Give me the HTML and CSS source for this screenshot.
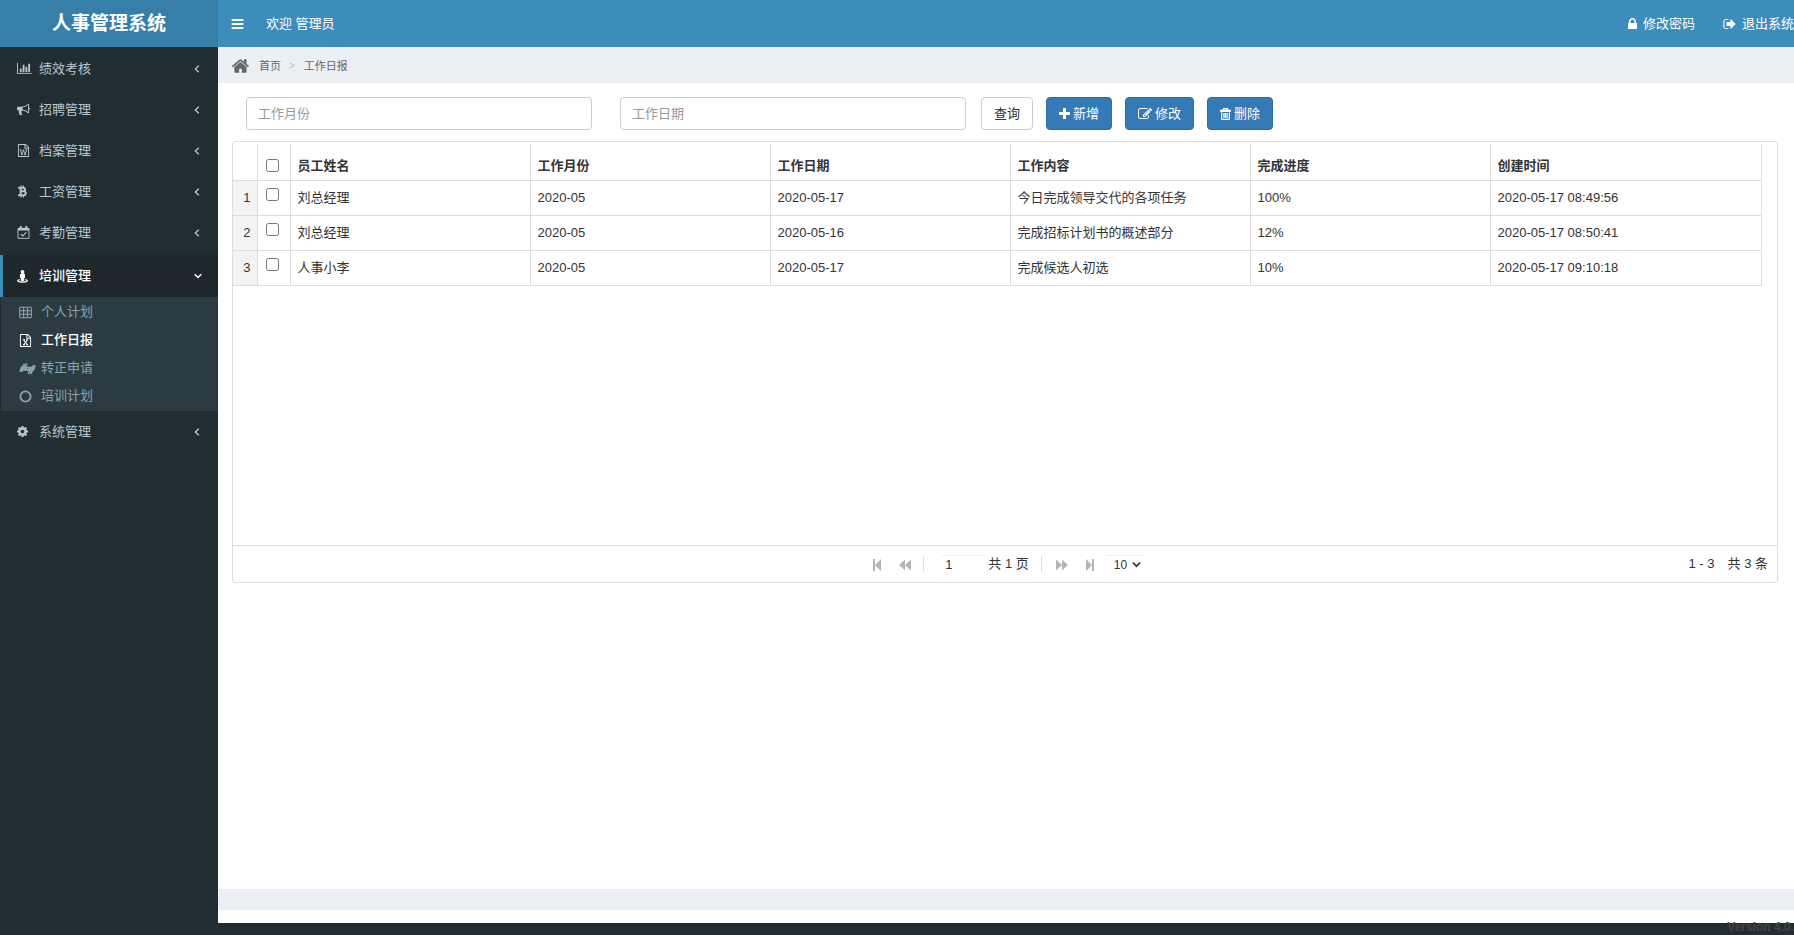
FILE: index.html
```html
<!DOCTYPE html>
<html lang="zh-CN">
<head>
<meta charset="utf-8">
<title>人事管理系统</title>
<link rel="stylesheet" href="styles.css">
</head>
<body>
<svg class="sprite" aria-hidden="true">
  <symbol id="i-chart" viewBox="0 0 2048 1792"><path d="M640 896v512h-256v-512h256zm384-512v1024h-256v-1024h256zm1024 1152v128h-2048v-1536h128v1408h1920zm-640-896v768h-256v-768h256zm384-384v1152h-256v-1152h256z"/></symbol>
  <symbol id="i-horn" viewBox="0 0 1792 1792"><path d="M1664 640q53 0 90.5 37.5t37.5 90.5-37.5 90.5-90.5 37.5v384q0 52-38 90t-90 38q-417-347-812-380-58 19-91 66t-31 100.5 40 92.5q-20 33-23 65.5t6 58 33.5 55 48 50 61.5 50.5q-29 58-111.5 83t-168.5 11.5-132-55.5q-7-23-29.5-87.5t-32-94.5-23-89-15-101 3.5-98.5 22-110.5h-122q-66 0-113-47t-47-113v-192q0-66 47-113t113-47h480q435 0 896-384 52 0 90 38t38 90v384zm-128 604v-954q-394 302-768 343v270q377 42 768 341z"/></symbol>
  <symbol id="i-word" viewBox="128 0 1536 1792"><path d="M1596 380q28 28 48 76t20 88v1152q0 40-28 68t-68 28h-1344q-40 0-68-28t-28-68v-1600q0-40 28-68t68-28h896q40 0 88 20t76 48zm-444-244v376h376q-10-29-22-41l-313-313q-12-12-41-22zm384 1528v-1024h-416q-40 0-68-28t-28-68v-416h-768v1536h1280zm-1175-896v107h70l164 661h159l128-485q7-20 10-46 2-16 2-24h4l3 24q1 3 3.5 20t5.5 26l128 485h159l164-661h70v-107h-300v107h90l-99 438q-5 20-7 46l-2 21h-4l-3-21q-1-5-4-21t-5-25l-144-545h-114l-144 545q-2 9-4.5 24.5t-3.5 21.5l-4 21h-4l-2-21q-2-26-7-46l-99-438h90v-107h-300z"/></symbol>
  <symbol id="i-excel" viewBox="128 0 1536 1792"><path d="M1596 380q28 28 48 76t20 88v1152q0 40-28 68t-68 28h-1344q-40 0-68-28t-28-68v-1600q0-40 28-68t68-28h896q40 0 88 20t76 48zm-444-244v376h376q-10-29-22-41l-313-313q-12-12-41-22zm384 1528v-1024h-416q-40 0-68-28t-28-68v-416h-768v1536h1280z"/><path d="M540 740h290v120h-60l130 190 130-190h-60v-120h290v120h-80l-200 280 210 290h80v120h-300v-120h70l-140-200-140 200h70v120h-300v-120h80l210-290-200-280h-80z"/></symbol>
  <symbol id="i-coin" viewBox="0 0 11 14"><path fill="none" stroke="currentColor" stroke-width="2.1" d="M1 2.900h5.200a1.900 1.900 0 0 1 0 3.900h-3.400 4a2.100 2.100 0 0 1 0 4.300h-6M3.500 3v8"/><path fill="none" stroke="currentColor" stroke-width="1.200" d="M4 .5v2M6.400 .5v2M4 11.500v2M6.400 11.500v2"/></symbol>
  <symbol id="i-calendar" viewBox="0 0 13 14"><path fill="none" stroke="currentColor" d="M.6 2.500h11.800v10.800h-11.800z"/><path d="M.5 2.200h12v2.600h-12zM2.500 0h2v4h-2zM8.500 0h2v4h-2z"/><path fill="none" stroke="currentColor" stroke-width="1.300" d="M3.700 8.700l2 2 3.800-3.800"/></symbol>
  <symbol id="i-person" viewBox="0 0 12 14"><circle cx="6" cy="2.100" r="2.100"/><path d="M4.400 4.100h3.200q1.200 0 1.200 1.300v3.300h-1v3.500h-3.600v-3.500h-1v-3.300q0-1.300 1.200-1.300z"/><path fill="none" stroke="currentColor" stroke-width="1.500" d="M3 10.400c-3 .6-3 2 0 2.500q3 .5 6 0c3-.5 3-1.900 0-2.500"/></symbol>
  <symbol id="i-table" viewBox="0 0 13 12"><path fill="none" stroke="currentColor" stroke-width="1.100" d="M1.500 .8h10q.8 0 .8.8v8.800q0 .8-.8.8h-10q-.8 0-.8-.8v-8.800q0-.8.8-.8zM.7 4.200h11.600M.7 7.700h11.600M4.600 1v10M8.500 1v10"/></symbol>
  <symbol id="i-hands" viewBox="0 0 17 13"><path d="M.2 9.800l1.200-4.300 2.200-1.700 1.200-2.600q.9-.6 1.100.4l-.5 1.900 2.200-2.400q.9-.3 1 .6l-1.300 2.700h1.900q.8.500.1 1.200l-1.500.8 1.500 1.200q.3 1-.7 1.100h-3.900l-2 1.300z"/><path d="M16.800 3.500l-1.200 4.100-2 2.200-1.400 2.600q-.9.600-1.100-.4l.6-2-2.300 2.200q-.9.200-.9-.7l1.200-2.600h-1.700q-.7-.5 0-1.200l1.500-.7-1.300-1.300q-.2-.9.700-1h3.600l2.200-1.900z"/></symbol>
  <symbol id="i-circle" viewBox="0 0 12 12"><circle cx="6" cy="6" r="4.700" fill="none" stroke="currentColor" stroke-width="1.700"/></symbol>
  <symbol id="i-cog" viewBox="128 128 1536 1536"><path d="M1152 896q0-106-75-181t-181-75-181 75-75 181 75 181 181 75 181-75 75-181zm512-109v222q0 12-8 23t-20 13l-185 28q-19 54-39 91 35 50 107 138 10 12 10 25t-9 23q-27 37-99 108t-94 71q-12 0-26-9l-138-108q-44 23-91 38-16 136-29 186-7 28-36 28h-222q-14 0-24.5-8.500t-11.500-21.500l-28-184q-49-16-90-37l-141 107q-10 9-25 9-14 0-25-11-126-114-165-168-7-10-7-23 0-12 8-23 15-21 51-66.500t54-70.500q-27-50-41-99l-183-27q-13-2-21-12.500t-8-23.500v-222q0-12 8-23t19-13l186-28q14-46 39-92-40-57-107-138-10-12-10-24 0-10 9-23 26-36 98.500-107.500t94.500-71.500q13 0 26 10l138 107q44-23 91-38 16-136 29-186 7-28 36-28h222q14 0 24.500 8.500t11.500 21.500l28 184q49 16 90 37l142-107q9-9 24-9 13 0 25 10 129 119 165 170 7 8 7 22 0 12-8 23-15 21-51 66.500t-54 70.500q26 50 41 98l183 28q13 2 21 12.500t8 23.500z"/></symbol>
  <symbol id="i-bars" viewBox="128 256 1536 1280"><path d="M1664 1344v128q0 26-19 45t-45 19h-1408q-26 0-45-19t-19-45v-128q0-26 19-45t45-19h1408q26 0 45 19t19 45zm0-512v128q0 26-19 45t-45 19h-1408q-26 0-45-19t-19-45v-128q0-26 19-45t45-19h1408q26 0 45 19t19 45zm0-512v128q0 26-19 45t-45 19h-1408q-26 0-45-19t-19-45v-128q0-26 19-45t45-19h1408q26 0 45 19t19 45z"/></symbol>
  <symbol id="i-home" viewBox="88 248 1616 1288"><path d="M1472 992v480q0 26-19 45t-45 19h-384v-384h-256v384h-384q-26 0-45-19t-19-45v-480q0-1 .5-3t.5-3l575-474 575 474q1 2 1 6zm223-69l-62 74q-8 9-21 11h-3q-13 0-21-7l-692-577-692 577q-12 8-24 7-13-2-21-11l-62-74q-8-10-7-23.500t11-21.500l719-599q32-26 76-26t76 26l244 204v-195q0-14 9-23t23-9h192q14 0 23 9t9 23v408l219 182q10 8 11 21.500t-7 23.500z"/></symbol>
  <symbol id="i-lock" viewBox="320 128 1152 1408"><path d="M640 768h512v-192q0-106-75-181t-181-75-181 75-75 181v192zm832 96v576q0 40-28 68t-68 28h-960q-40 0-68-28t-28-68v-576q0-40 28-68t68-28h32v-192q0-184 132-316t316-132 316 132 132 316v192h32q40 0 68 28t28 68z"/></symbol>
  <symbol id="i-out" viewBox="64 256 1568 1280"><path d="M704 1440q0 4 1 20t.5 26.500-3 23.500-10 19.500-20.500 6.500h-320q-119 0-203.500-84.500t-84.500-203.500v-704q0-119 84.500-203.500t203.500-84.500h320q13 0 22.500 9.500t9.500 22.500q0 4 1 20t.5 26.500-3 23.500-10 19.500-20.500 6.500h-320q-66 0-113 47t-47 113v704q0 66 47 113t113 47h312l11.500 1 11.500 3 8 5.500 7 9 2 13.500zm928-544q0 26-19 45l-544 544q-19 19-45 19t-45-19-19-45v-288h-448q-26 0-45-19t-19-45v-384q0-26 19-45t45-19h448v-288q0-26 19-45t45-19 45 19l544 544q19 19 19 45z"/></symbol>
  <symbol id="i-plus" viewBox="192 128 1408 1408"><path d="M1600 736v192q0 40-28 68t-68 28h-416v416q0 40-28 68t-68 28h-192q-40 0-68-28t-28-68v-416h-416q-40 0-68-28t-28-68v-192q0-40 28-68t68-28h416v-416q0-40 28-68t68-28h192q40 0 68 28t28 68v416h416q40 0 68 28t28 68z"/></symbol>
  <symbol id="i-edit" viewBox="0 128 1792 1408"><path d="M888 1184l116-116-152-152-116 116v56h96v96h56zm440-720q-16-16-33 1l-350 350q-17 17-1 33t33-1l350-350q17-17 1-33zm80 594v190q0 119-84.500 203.500t-203.500 84.500h-832q-119 0-203.500-84.500t-84.500-203.500v-832q0-119 84.500-203.500t203.500-84.500h832q63 0 117 25 15 7 18 23 3 17-9 29l-49 49q-14 14-32 8-23-6-45-6h-832q-66 0-113 47t-47 113v832q0 66 47 113t113 47h832q66 0 113-47t47-113v-126q0-13 9-22l64-64q15-15 35-7t20 29zm-96-738l288 288-672 672h-288v-288zm444 132l-92 92-288-288 92-92q28-28 68-28t68 28l152 152q28 28 28 68t-28 68z"/></symbol>
  <symbol id="i-trash" viewBox="0 0 11 12"><path fill="none" stroke="currentColor" stroke-width="1.200" d="M3.700 1.800v-1.200h3.600v1.200M1.600 4.500v6q0 .9.900.9h6q.9 0 .9-.9v-6M3.900 5v5M5.500 5v5M7.100 5v5"/><path d="M.8 1.600h9.400q.6 0 .6.600v1.800h-10.600v-1.800q0-.6.600-.6z"/></symbol>
  <symbol id="i-left" viewBox="0 0 6 8"><path fill="none" stroke="currentColor" stroke-width="1.300" d="M4.800 .7l-3.500 3.300 3.500 3.300"/></symbol>
  <symbol id="i-down" viewBox="0 0 8 6"><path fill="none" stroke="currentColor" stroke-width="1.500" d="M.7 1.200l3.300 3.300 3.300-3.300"/></symbol>
  <symbol id="i-first" viewBox="0 0 8 12"><path d="M0 0h2v12h-2zM8 0v12l-6-6z"/></symbol>
  <symbol id="i-prev" viewBox="0 0 12 12"><path d="M6 .5v11l-6-5.500zM12 .5v11l-6-5.500z"/></symbol>
  <symbol id="i-next" viewBox="0 0 12 12"><path d="M0 .5v11l6-5.500zM6 .5v11l6-5.500z"/></symbol>
  <symbol id="i-last" viewBox="0 0 8 12"><path d="M6 0h2v12h-2zM0 0v12l6-6z"/></symbol>
</svg>
<div class="app">
  <aside class="sidebar">
    <h1 class="brand">人事管理系统</h1>
    <nav>
      <ul class="menu">
        <li><a class="menu-link" href="#"><svg class="icon wide"><use href="#i-chart"/></svg><span>绩效考核</span><svg class="arrow"><use href="#i-left"/></svg></a></li>
        <li><a class="menu-link" href="#"><svg class="icon"><use href="#i-horn"/></svg><span>招聘管理</span><svg class="arrow"><use href="#i-left"/></svg></a></li>
        <li><a class="menu-link" href="#"><svg class="icon"><use href="#i-word"/></svg><span>档案管理</span><svg class="arrow"><use href="#i-left"/></svg></a></li>
        <li><a class="menu-link" href="#"><svg class="icon slim"><use href="#i-coin"/></svg><span>工资管理</span><svg class="arrow"><use href="#i-left"/></svg></a></li>
        <li><a class="menu-link" href="#"><svg class="icon"><use href="#i-calendar"/></svg><span>考勤管理</span><svg class="arrow"><use href="#i-left"/></svg></a></li>
        <li>
          <a class="menu-link active" href="#"><svg class="icon slim"><use href="#i-person"/></svg><span>培训管理</span><svg class="arrow open"><use href="#i-down"/></svg></a>
          <ul class="submenu">
            <li><a class="sub-link" href="#"><svg class="icon"><use href="#i-table"/></svg><span>个人计划</span></a></li>
            <li><a class="sub-link current" href="#"><svg class="icon"><use href="#i-excel"/></svg><span>工作日报</span></a></li>
            <li><a class="sub-link" href="#"><svg class="icon hands"><use href="#i-hands"/></svg><span>转正申请</span></a></li>
            <li><a class="sub-link" href="#"><svg class="icon"><use href="#i-circle"/></svg><span>培训计划</span></a></li>
          </ul>
        </li>
        <li><a class="menu-link" href="#"><svg class="icon slim"><use href="#i-cog"/></svg><span>系统管理</span><svg class="arrow"><use href="#i-left"/></svg></a></li>
      </ul>
    </nav>
  </aside>

  <div class="page">
    <header class="topbar">
      <button class="toggle" type="button" aria-label="菜单"><svg class="bars"><use href="#i-bars"/></svg></button>
      <span class="welcome">欢迎 管理员</span>
      <a class="top-link" href="#"><svg class="lock"><use href="#i-lock"/></svg>修改密码</a>
      <a class="top-link" href="#"><svg class="out"><use href="#i-out"/></svg>退出系统</a>
    </header>

    <nav class="crumbs">
      <svg class="home"><use href="#i-home"/></svg>
      <a href="#">首页</a>
      <span class="sep">&gt;</span>
      <span>工作日报</span>
    </nav>

    <main class="content">
      <form class="toolbar">
        <input class="field" type="text" placeholder="工作月份" aria-label="工作月份">
        <input class="field" type="text" placeholder="工作日期" aria-label="工作日期">
        <div class="actions">
          <button class="btn" type="button">查询</button>
          <button class="btn primary" type="button"><svg class="plus"><use href="#i-plus"/></svg>新增</button>
          <button class="btn primary" type="button"><svg class="edit"><use href="#i-edit"/></svg>修改</button>
          <button class="btn primary" type="button"><svg class="trash"><use href="#i-trash"/></svg>删除</button>
        </div>
      </form>

      <section class="panel">
        <div class="grid-area">
          <table class="grid">
            <colgroup><col class="c-num"><col class="c-check"><col class="c-data"><col class="c-data"><col class="c-data"><col class="c-data"><col class="c-data"><col></colgroup>
            <thead>
              <tr><th></th><th class="check"><input type="checkbox" aria-label="全选"></th><th>员工姓名</th><th>工作月份</th><th>工作日期</th><th>工作内容</th><th>完成进度</th><th>创建时间</th></tr>
            </thead>
            <tbody>
              <tr><td class="num">1</td><td class="check"><input type="checkbox" aria-label="选择第1行"></td><td>刘总经理</td><td>2020-05</td><td>2020-05-17</td><td>今日完成领导交代的各项任务</td><td>100%</td><td>2020-05-17 08:49:56</td></tr>
              <tr><td class="num">2</td><td class="check"><input type="checkbox" aria-label="选择第2行"></td><td>刘总经理</td><td>2020-05</td><td>2020-05-16</td><td>完成招标计划书的概述部分</td><td>12%</td><td>2020-05-17 08:50:41</td></tr>
              <tr><td class="num">3</td><td class="check"><input type="checkbox" aria-label="选择第3行"></td><td>人事小李</td><td>2020-05</td><td>2020-05-17</td><td>完成候选人初选</td><td>10%</td><td>2020-05-17 09:10:18</td></tr>
            </tbody>
          </table>
        </div>
        <div class="pager">
          <div class="pages">
            <button class="step" type="button" aria-label="首页"><svg class="edge"><use href="#i-first"/></svg></button>
            <button class="step" type="button" aria-label="上一页"><svg class="turn"><use href="#i-prev"/></svg></button>
            <span class="rule"></span>
            <input class="page-no" type="text" value="1" aria-label="页码">
            <span class="total">共 1 页</span>
            <span class="rule"></span>
            <button class="step" type="button" aria-label="下一页"><svg class="turn"><use href="#i-next"/></svg></button>
            <button class="step" type="button" aria-label="末页"><svg class="edge"><use href="#i-last"/></svg></button>
            <span class="size"><select aria-label="每页条数"><option>10</option></select><svg class="caret"><use href="#i-down"/></svg></span>
          </div>
          <div class="info"><span>1 - 3</span><span>共 3 条</span></div>
        </div>
      </section>
    </main>

    <div class="band"></div>
    <footer class="footer"></footer>
    <div class="version">Version 4.0.</div>
  </div>
</div>
</body>
</html>
```
FILE: styles.css
```css
* { box-sizing: border-box; }

body {
  margin: 0;
  background: #222d32;
  color: #333;
  font: 13px/18px "Liberation Sans", "Noto Sans CJK SC", sans-serif;
}

a { color: inherit; text-decoration: none; }
ul { margin: 0; padding: 0; list-style: none; }
svg { flex: none; fill: currentColor; }
input, button, select { font: inherit; color: inherit; }
.sprite { display: none; }

.app {
  display: grid;
  grid-template-columns: 218px minmax(0, 1fr);
  min-height: 100vh;
}

/* Sidebar */
.sidebar { background: #222d32; color: #b8c7ce; }

.brand {
  margin: 0;
  background: #367fa9;
  color: #fff;
  font-size: 19px;
  line-height: 47px;
  text-align: center;
}

.menu { padding-top: 1px; }

.menu-link {
  display: flex;
  align-items: center;
  height: 41px;
  padding: 0 18px 0 14px;
  border-left: 3px solid transparent;
}

.menu-link span { flex: 1; }
.menu-link .icon { width: 13px; height: 13px; margin-right: 9px; }
.menu-link .wide { width: 15px; margin-right: 7px; }
.menu-link .slim { width: 11px; margin-right: 11px; }
.arrow { width: 6px; height: 8px; }
.arrow.open { width: 8px; height: 6px; }

.menu-link.active {
  height: 42px;
  margin-top: 2px;
  padding-right: 16px;
  border-left-color: #3c8dbc;
  background: #1e282c;
  color: #fff;
  font-weight: 500;
}

.submenu {
  margin-left: 1px;
  padding: 1px 0;
  background: #2c3b41;
  color: #8aa4af;
}

.sub-link {
  display: flex;
  align-items: center;
  height: 28px;
  padding-left: 18px;
}

.sub-link .icon { width: 13px; height: 13px; margin-right: 9px; }
.sub-link .hands { width: 17px; margin-right: 5px; }
.sub-link.current { color: #fff; font-weight: 500; }

/* Top bar */
.page { display: flex; flex-direction: column; min-width: 0; overflow: hidden; }

.topbar {
  display: flex;
  align-items: center;
  height: 47px;
  background: #3c8dbc;
  color: #fff;
}

.toggle {
  display: flex;
  margin: 0 22px 0 13px;
  padding: 0;
  border: 0;
  background: none;
}

.bars { width: 13px; height: 10px; }
.welcome { flex: 1; }
.top-link { display: flex; align-items: center; gap: 6px; margin-left: 28px; }
.lock { width: 9px; height: 11px; }
.out { width: 13px; height: 10px; }

/* Breadcrumb */
.crumbs {
  display: flex;
  align-items: center;
  height: 36px;
  padding: 1px 0 0 14px;
  background: #ecf0f5;
  color: #666;
  font-size: 11px;
}

.home { width: 17px; height: 14px; margin-right: 10px; }
.sep { margin: 0 9px 0 8px; color: #bbb; font-size: 10px; }

/* Content */
.content { flex: 1; padding: 14px 16px 0 14px; background: #fff; }

.toolbar { display: flex; padding-left: 14px; }

.field {
  flex: 0 1 346px;
  min-width: 0;
  height: 33px;
  margin-right: 28px;
  padding: 0 11px;
  border: 1px solid #ccc;
  border-radius: 4px;
}

.field + .field { margin-right: 15px; }
.field::placeholder { color: #999; }
.actions { display: flex; gap: 13px; }

.btn {
  display: flex;
  align-items: center;
  gap: 3px;
  height: 33px;
  padding: 0 12px;
  border: 1px solid #ccc;
  border-radius: 4px;
  background: #fff;
  white-space: nowrap;
}

.btn.primary { border-color: #2e6da4; background: #337ab7; color: #fff; }
.plus { width: 11px; height: 11px; }
.edit { width: 14px; height: 11px; }
.trash { width: 11px; height: 12px; }

.panel {
  margin-top: 11px;
  border: 1px solid #ddd;
  border-radius: 3px;
}

.grid-area { min-height: 403px; padding: 2px 15px 0 0; }

.grid {
  width: 100%;
  table-layout: fixed;
  border-collapse: collapse;
}

.c-num { width: 24px; }
.c-check { width: 33px; }
.c-data { width: 240px; }

.grid th,
.grid td {
  height: 35px;
  padding: 0 7px;
  border: 1px solid #ddd;
  border-left: 0;
  text-align: left;
  overflow: hidden;
  white-space: nowrap;
}

.grid th { height: 36px; padding-top: 8px; border-top: 0; }
.grid .num { padding: 0 6px 0 0; background: #f3f3f3; text-align: right; }
.grid .check { padding: 0 3px 0 0; text-align: center; vertical-align: top; }
.grid input { width: 13px; height: 13px; margin: 7px 0 0; vertical-align: top; }
.grid th input { margin-top: 15px; }

/* Pager */
.pager {
  display: grid;
  grid-template-columns: 1fr auto 1fr;
  align-items: center;
  height: 37px;
  border-top: 1px solid #ddd;
}

.pages { display: flex; grid-column: 2; align-items: center; padding-left: 6px; }
.step { display: flex; margin: 2px 18px 0 0; padding: 0; border: 0; background: none; color: #b5b5b5; }
.step + .rule { margin-left: -6px; }
.edge { width: 8px; height: 12px; }
.turn { width: 12px; height: 12px; }
.rule { width: 1px; height: 16px; margin-right: 14px; background: #ddd; }

.page-no {
  width: 42px;
  height: 18px;
  margin: 0 4px;
  padding: 0 3px;
  border: 0;
  border-top: 1px solid #eee;
  background: none;
}

.total { margin-right: 12px; }

.size {
  display: flex;
  align-items: center;
  gap: 4px;
  margin-left: -6px;
  padding: 0 2px 0 8px;
  border-top: 1px solid #eee;
}

.size select {
  width: 14px;
  padding: 0;
  border: 0;
  appearance: none;
  background: none;
  font-size: 12px;
}

.caret { width: 9px; height: 7px; }
.info { display: flex; gap: 13px; justify-content: flex-end; padding-right: 9px; }

/* Page foot */
.band { height: 21px; background: #ecf0f5; }
.footer { height: 13px; background: #fff; }

.version {
  height: 12px;
  color: #444;
  font-size: 12px;
  font-weight: 700;
  line-height: 8px;
  text-align: right;
}
```
